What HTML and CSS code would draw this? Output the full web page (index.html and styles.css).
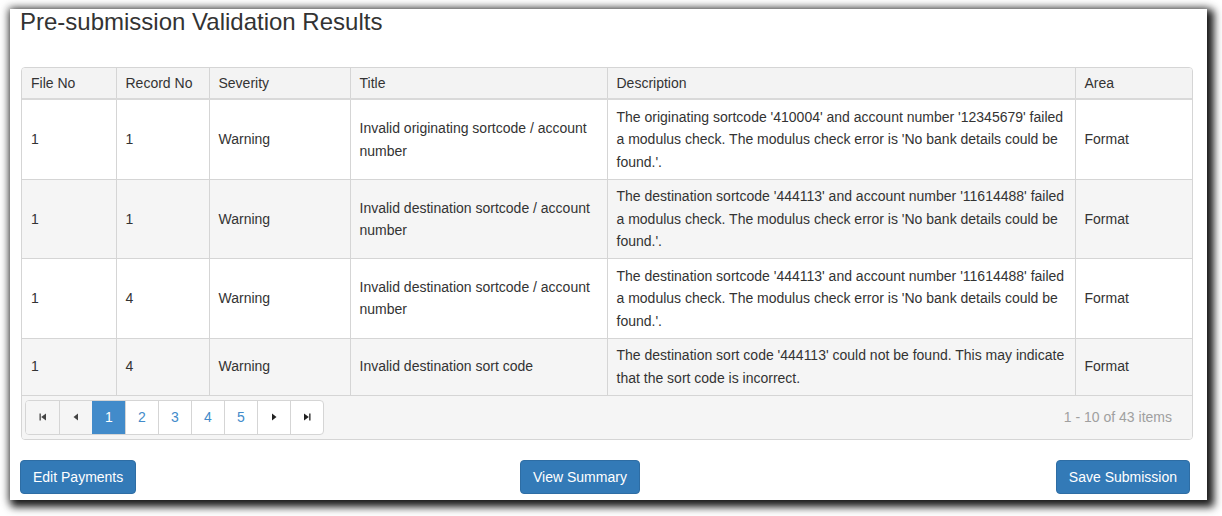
FILE: index.html
```html
<!DOCTYPE html>
<html>
<head>
<meta charset="utf-8">
<link rel="stylesheet" href="styles.css">
</head>
<body>
<div class="panel">
  <h3 class="title">Pre-submission Validation Results</h3>
  <div class="grid">
    <table class="tbl">
      <colgroup>
        <col style="width:94px"><col style="width:93px"><col style="width:141px"><col style="width:257px"><col style="width:468px"><col>
      </colgroup>
      <thead>
        <tr><th>File No</th><th>Record No</th><th>Severity</th><th>Title</th><th>Description</th><th>Area</th></tr>
      </thead>
      <tbody>
        <tr>
          <td>1</td><td>1</td><td>Warning</td><td>Invalid originating sortcode / account number</td>
          <td>The originating sortcode '410004' and account number '12345679' failed a modulus check. The modulus check error is 'No bank details could be found.'.</td>
          <td>Format</td>
        </tr>
        <tr class="alt">
          <td>1</td><td>1</td><td>Warning</td><td>Invalid destination sortcode / account number</td>
          <td>The destination sortcode '444113' and account number '11614488' failed a modulus check. The modulus check error is 'No bank details could be found.'.</td>
          <td>Format</td>
        </tr>
        <tr>
          <td>1</td><td>4</td><td>Warning</td><td>Invalid destination sortcode / account number</td>
          <td>The destination sortcode '444113' and account number '11614488' failed a modulus check. The modulus check error is 'No bank details could be found.'.</td>
          <td>Format</td>
        </tr>
        <tr class="alt">
          <td>1</td><td>4</td><td>Warning</td><td>Invalid destination sort code</td>
          <td>The destination sort code '444113' could not be found. This may indicate that the sort code is incorrect.</td>
          <td>Format</td>
        </tr>
      </tbody>
    </table>
    <div class="pager">
      <div class="pages">
        <span class="pg dis"><svg width="8" height="8" viewBox="0 0 8 8"><rect x="0.5" y="0.5" width="1.3" height="7" fill="#444"/><path d="M7 0.5 L2.2 4 L7 7.5Z" fill="#444"/></svg></span>
        <span class="pg dis"><svg width="8" height="8" viewBox="0 0 8 8"><path d="M6 0.5 L1.5 4 L6 7.5Z" fill="#444"/></svg></span>
        <span class="pg act">1</span>
        <span class="pg">2</span>
        <span class="pg">3</span>
        <span class="pg">4</span>
        <span class="pg">5</span>
        <span class="pg"><svg width="8" height="8" viewBox="0 0 8 8"><path d="M2 0.5 L6.5 4 L2 7.5Z" fill="#222"/></svg></span>
        <span class="pg"><svg width="8" height="8" viewBox="0 0 8 8"><path d="M1 0.5 L5.8 4 L1 7.5Z" fill="#222"/><rect x="6.2" y="0.5" width="1.3" height="7" fill="#222"/></svg></span>
      </div>
      <div class="info">1 - 10 of 43 items</div>
    </div>
  </div>
  <div class="actions">
    <button class="btn">Edit Payments</button>
    <button class="btn">View Summary</button>
    <button class="btn right">Save Submission</button>
  </div>
</div>
</body>
</html>
```
FILE: styles.css
```css
html, body {
  margin: 0;
  padding: 0;
  background: #fff;
}
body {
  font-family: "Liberation Sans", Arial, sans-serif;
  font-size: 14px;
  color: #333;
  min-height: 516px;
  overflow: hidden;
}
.panel {
  margin: 9px 0 0 10px;
  width: 1197px;
  height: 491px;
  background: #fff;
  box-shadow: 0 0 8px 2px rgba(0, 0, 0, 0.35), 4px 4px 8px 3px rgba(0, 0, 0, 0.85);
  box-sizing: border-box;
  padding: 0 0 0 10px;
}
.title {
  margin: 0;
  font-size: 24px;
  font-weight: normal;
  line-height: 25px;
  color: #333;
}
.grid {
  margin: 33px 0 0 1px;
  width: 1172px;
  border: 1px solid #d5d5d5;
  border-radius: 4px;
  box-sizing: border-box;
  overflow: hidden;
}
.tbl {
  width: 100%;
  border-collapse: collapse;
  table-layout: fixed;
}
.tbl th {
  background: #f3f3f3;
  font-weight: normal;
  text-align: left;
  padding: 4px 10px 4px 9px;
  line-height: 22.4px;
  border-left: 1px solid #d5d5d5;
  border-bottom: 2px solid #d9d9d9;
}
.tbl td {
  padding: 5.6px 6px 5.6px 9px;
  line-height: 22.4px;
  vertical-align: middle;
  border-left: 1px solid #d5d5d5;
  border-bottom: 1px solid #d5d5d5;
}
.tbl th:first-child, .tbl td:first-child {
  border-left: none;
}
.tbl tr.alt td {
  background: #f5f5f5;
}
.pager {
  background: #f5f5f5;
  height: 43px;
  display: flex;
  align-items: center;
  justify-content: space-between;
  padding: 0 20px 0 3px;
}
.pages {
  display: flex;
  border: 1px solid #d5d5d5;
  border-radius: 4px;
  overflow: hidden;
  background: #fff;
}
.pg {
  width: 33px;
  height: 33px;
  display: flex;
  align-items: center;
  justify-content: center;
  color: #428bca;
  border-left: 1px solid #d5d5d5;
  box-sizing: border-box;
  font-size: 14px;
}
.pg:first-child {
  border-left: none;
}
.pg.dis {
  background: #f5f5f5;
}
.pg.act {
  background: #428bca;
  color: #fff;
  border-left-color: #428bca;
}
.info {
  color: #a0a0a0;
}
.actions {
  display: grid;
  grid-template-columns: 500px auto 1fr;
  width: 1170px;
  margin-top: 20px;
}
.btn {
  font-family: "Liberation Sans", Arial, sans-serif;
  font-size: 14px;
  line-height: 20px;
  padding: 6px 12px;
  color: #fff;
  background: #337ab7;
  border: 1px solid #2e6da4;
  border-radius: 4px;
  justify-self: start;
}
.btn.right {
  justify-self: end;
}
```
